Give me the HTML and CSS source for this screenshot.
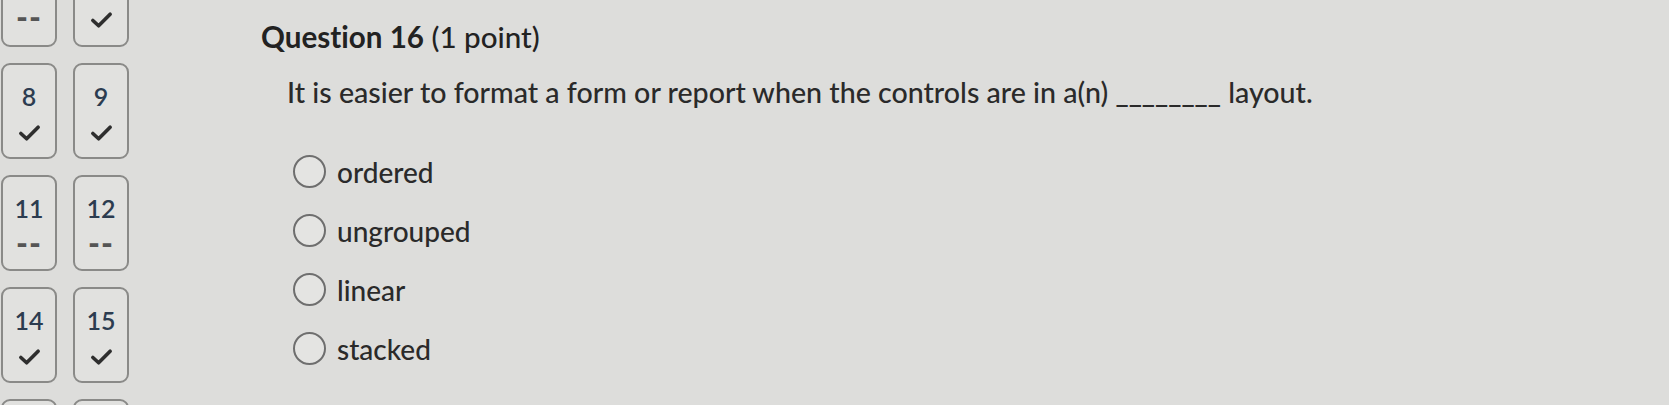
FILE: index.html
```html
<!DOCTYPE html>
<html lang="en">
<head>
<meta charset="utf-8">
<title>Question 16</title>
<link rel="stylesheet" href="styles.css">
</head>
<body>
<div class="page">
  <nav class="qnav">
    <div class="tile tile-top"><span class="dash">--</span></div>
    <div class="tile tile-top"><svg class="check" viewBox="0 0 24 18"><path d="M3 9.5 L9 15 L21 3"/></svg></div>
    <div class="tile"><span class="num">8</span><svg class="check" viewBox="0 0 24 18"><path d="M3 9.5 L9 15 L21 3"/></svg></div>
    <div class="tile"><span class="num">9</span><svg class="check" viewBox="0 0 24 18"><path d="M3 9.5 L9 15 L21 3"/></svg></div>
    <div class="tile"><span class="num">11</span><span class="dash">--</span></div>
    <div class="tile"><span class="num">12</span><span class="dash">--</span></div>
    <div class="tile"><span class="num">14</span><svg class="check" viewBox="0 0 24 18"><path d="M3 9.5 L9 15 L21 3"/></svg></div>
    <div class="tile"><span class="num">15</span><svg class="check" viewBox="0 0 24 18"><path d="M3 9.5 L9 15 L21 3"/></svg></div>
    <div class="tile"></div>
    <div class="tile"></div>
  </nav>
  <main class="question">
    <h1 class="title"><strong>Question 16</strong> (1 point)</h1>
    <p class="prompt">It is easier to format a form or report when the controls are in a(n) ________ layout.</p>
    <ul class="options">
      <li class="option"><span class="radio"></span><span class="label">ordered</span></li>
      <li class="option"><span class="radio"></span><span class="label">ungrouped</span></li>
      <li class="option"><span class="radio"></span><span class="label">linear</span></li>
      <li class="option"><span class="radio"></span><span class="label">stacked</span></li>
    </ul>
  </main>
</div>
</body>
</html>
```
FILE: styles.css
```css
html, body {
  margin: 0;
  padding: 0;
  height: 100%;
  overflow: hidden;
}
body {
  background: #dddddb;
  font-family: Lato, "Open Sans", sans-serif;
  font-variant-ligatures: none;
  color: #2f2f2f;
}
.page {
  display: flex;
  align-items: flex-start;
}
.qnav {
  display: grid;
  grid-template-columns: 56px 56px;
  grid-auto-rows: 96px;
  column-gap: 16px;
  row-gap: 16px;
  margin-top: -49px;
  margin-left: 1px;
}
.tile {
  box-sizing: border-box;
  border: 2px solid #8a8a88;
  border-radius: 9px;
  background: #e1e1df;
  display: flex;
  flex-direction: column;
  align-items: center;
  padding-top: 16px;
}
.tile-top {
  justify-content: flex-end;
  padding-bottom: 16px;
}
.tile-top .check,
.tile-top .dash {
  margin-top: 0;
}
.num {
  font-size: 25px;
  line-height: 30px;
  color: #2c3c50;
  font-weight: 600;
}
.check {
  width: 23px;
  height: 18px;
  margin-top: 13px;
  fill: none;
  stroke: #2e2e2e;
  stroke-width: 3.8;
  stroke-linecap: round;
  stroke-linejoin: round;
}
.dash {
  font-size: 32px;
  line-height: 24px;
  font-weight: 900;
  color: #555;
  letter-spacing: 1px;
  margin-top: 8px;
}
.question {
  margin-left: 132px;
  padding-top: 20px;
}
.title {
  margin: 0;
  font-size: 29.6px;
  line-height: 34px;
  font-weight: 500;
  color: #222;
}
.title strong {
  font-weight: 700;
}
.prompt {
  margin: 21px 0 0 26px;
  font-size: 28.6px;
  line-height: 34px;
  font-weight: 500;
  color: #2a2a2a;
}
.options {
  list-style: none;
  margin: 46px 0 0 32px;
  padding: 0;
  display: flex;
  flex-direction: column;
  gap: 26px;
}
.option {
  display: flex;
  align-items: center;
  gap: 11px;
}
.radio {
  box-sizing: border-box;
  width: 33px;
  height: 33px;
  border: 2px solid #6e6e6e;
  border-radius: 50%;
  background: #e4e4e2;
}
.label {
  font-size: 28px;
  line-height: 32px;
  font-weight: 500;
  color: #2a2a2a;
}
```
